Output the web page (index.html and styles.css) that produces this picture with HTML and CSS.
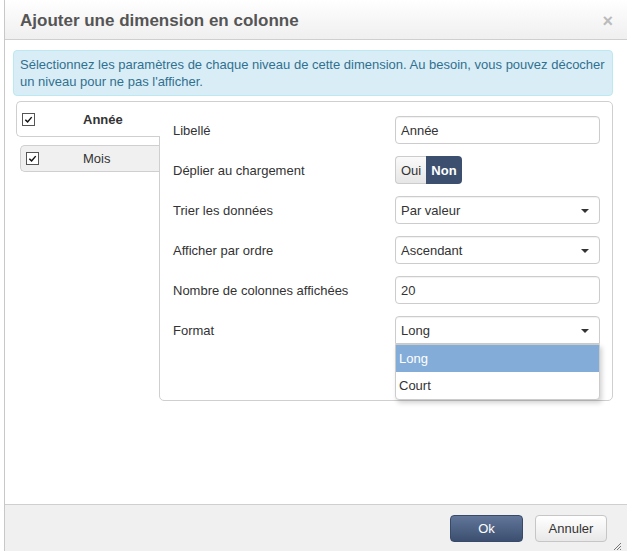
FILE: index.html
```html
<!DOCTYPE html>
<html lang="fr">
<head>
<meta charset="utf-8">
<link rel="stylesheet" href="styles.css">
</head>
<body>
<div class="dialog">
  <div class="dlg-header">
    <h1 class="dlg-title">Ajouter une dimension en colonne</h1>
    <span class="dlg-close">×</span>
  </div>
  <div class="dlg-body">
    <div class="info">Sélectionnez les paramètres de chaque niveau de cette dimension. Au besoin, vous pouvez décocher un niveau pour ne pas l'afficher.</div>
    <div class="levels">
      <div class="tabs">
        <div class="tab tab-active">
          <span class="cb"><svg viewBox="0 0 12 12" width="12" height="12"><path d="M2.5 6.2 L5 8.6 L9.5 3.4" fill="none" stroke="#111" stroke-width="1.6"/></svg></span>
          <span class="tab-label">Année</span>
        </div>
        <div class="tab tab-idle">
          <span class="cb"><svg viewBox="0 0 12 12" width="12" height="12"><path d="M2.5 6.2 L5 8.6 L9.5 3.4" fill="none" stroke="#111" stroke-width="1.6"/></svg></span>
          <span class="tab-label tab-label-idle">Mois</span>
        </div>
      </div>
      <div class="panel">
        <div class="row">
          <label class="lbl">Libellé</label>
          <div class="field">Année</div>
        </div>
        <div class="row">
          <label class="lbl">Déplier au chargement</label>
          <div class="toggle"><span class="tg tg-off">Oui</span><span class="tg tg-on">Non</span></div>
        </div>
        <div class="row">
          <label class="lbl">Trier les données</label>
          <div class="field select">Par valeur<span class="caret"></span></div>
        </div>
        <div class="row">
          <label class="lbl">Afficher par ordre</label>
          <div class="field select">Ascendant<span class="caret"></span></div>
        </div>
        <div class="row">
          <label class="lbl">Nombre de colonnes affichées</label>
          <div class="field">20</div>
        </div>
        <div class="row">
          <label class="lbl">Format</label>
          <div class="field select open">Long<span class="caret"></span>
            <ul class="menu">
              <li class="opt opt-sel">Long</li>
              <li class="opt">Court</li>
            </ul>
          </div>
        </div>
      </div>
    </div>
  </div>
  <div class="dlg-footer">
    <button class="btn btn-primary">Ok</button>
    <button class="btn btn-default">Annuler</button>
  </div>
  <svg class="grip" width="8" height="8" viewBox="0 0 8 8"><path d="M1 8 L8 1 M4 8 L8 4 M7 8 L8 7" stroke="#777" stroke-width="1"/></svg>
</div>
</body>
</html>
```

FILE: styles.css
```css
* { box-sizing: border-box; }
html, body { margin: 0; padding: 0; background: #fff; }
body {
  font-family: Arial, "Liberation Sans", sans-serif;
  font-size: 13px;
  color: #333;
}
.dialog {
  position: relative;
  margin-left: 4px;
  width: 623px;
  height: 551px;
  border-left: 1px solid #c8c8c8;
  display: flex;
  flex-direction: column;
}
.dlg-header {
  height: 40px;
  border-bottom: 1px solid #cfcfcf;
  background: linear-gradient(#ffffff, #efefef);
  display: flex;
  align-items: center;
  justify-content: space-between;
  padding: 0 14px 0 15px;
}
.dlg-title {
  margin: 0;
  font-size: 17px;
  font-weight: bold;
  color: #555;
  padding-top: 2px;
}
.dlg-close {
  color: #bbb;
  font-size: 18px;
  line-height: 1;
  font-weight: bold;
  padding-top: 2px;
}
.dlg-body {
  flex: 1;
  padding: 10px 0 0 8px;
}
.info {
  width: 600px;
  height: 46px;
  background: #d9edf7;
  border: 1px solid #bce8f1;
  border-radius: 4px;
  color: #31708f;
  line-height: 17px;
  padding: 5px 6px 0 6px;
}
.levels {
  display: flex;
  align-items: flex-start;
  margin-top: 5px;
  margin-left: 3px;
}
.tabs {
  width: 143px;
  display: flex;
  flex-direction: column;
  align-items: flex-end;
}
.tab {
  display: flex;
  align-items: center;
  border: 1px solid #cfcfcf;
  border-right: none;
  border-radius: 5px 0 0 5px;
}
.tab-active {
  width: 144px;
  height: 36px;
  margin-right: -1px;
  position: relative;
  z-index: 1;
  background: #fff;
  padding: 0 0 0 5px;
  border-radius: 5px 0 0 5px;
  font-weight: bold;
}
.tab-idle {
  width: 139px;
  height: 27px;
  margin-top: 8px;
  background: #f0f0f0;
  padding-left: 5px;
}
.cb {
  width: 13px;
  height: 13px;
  border: 1px solid #555;
  background: #fff;
  display: inline-flex;
  align-items: center;
  justify-content: center;
  flex: none;
}
.cb svg { width: 11px; height: 11px; }
.tab-label {
  margin-left: 48px;
}
.tab-label-idle {
  margin-left: 44px;
}
.panel {
  width: 454px;
  height: 300px;
  border: 1px solid #cfcfcf;
  border-radius: 0 5px 5px 5px;
  padding: 14px 12px 0 13px;
  display: flex;
  flex-direction: column;
  gap: 12px;
}
.row {
  display: flex;
  align-items: center;
  height: 28px;
}
.lbl {
  width: 222px;
  flex: none;
  padding-top: 1px;
}
.field {
  position: relative;
  width: 205px;
  height: 28px;
  border: 1px solid #ccc;
  border-radius: 4px;
  background: #fff;
  padding: 0 5px;
  display: flex;
  align-items: center;
  box-shadow: inset 0 1px 1px rgba(0,0,0,0.06);
}
.caret {
  position: absolute;
  right: 10px;
  top: 12px;
  width: 0;
  height: 0;
  border-left: 4px solid transparent;
  border-right: 4px solid transparent;
  border-top: 4px solid #333;
}
.field.open {
  border-radius: 4px 4px 0 0;
}
.menu {
  position: absolute;
  left: -1px;
  top: 27px;
  width: 205px;
  margin: 0;
  padding: 0;
  list-style: none;
  background: #fff;
  border: 1px solid #ccc;
  border-radius: 0 0 4px 4px;
  box-shadow: 2px 3px 5px rgba(0,0,0,0.18);
  z-index: 2;
}
.opt {
  height: 27px;
  line-height: 27px;
  padding-left: 3px;
}
.opt-sel {
  background: #84acd8;
  color: #fff;
}
.toggle {
  display: flex;
  height: 28px;
}
.tg {
  display: flex;
  align-items: center;
  justify-content: center;
  height: 28px;
}
.tg-off {
  width: 31px;
  border: 1px solid #ccc;
  border-right: none;
  border-radius: 4px 0 0 4px;
  background: linear-gradient(#fafafa, #e6e6e6);
  color: #333;
}
.tg-on {
  width: 36px;
  border-radius: 0 4px 4px 0;
  background: #3d4f6f;
  color: #fff;
  font-weight: bold;
}
.dlg-footer {
  height: 47px;
  border-top: 1px solid #cfcfcf;
  background: #f0f0f0;
  display: flex;
  justify-content: flex-end;
  align-items: flex-start;
  gap: 12px;
  padding: 10px 20px 0 0;
}
.btn {
  height: 27px;
  font-family: Arial, "Liberation Sans", sans-serif;
  font-size: 13px;
  border-radius: 4px;
  padding: 0;
}
.btn-primary {
  width: 73px;
  color: #fff;
  border: 1px solid #384a68;
  background: linear-gradient(#61769a, #3c4f70);
}
.btn-default {
  width: 72px;
  color: #333;
  border: 1px solid #c6c6c6;
  background: linear-gradient(#ffffff, #e8e8e8);
}
.grip {
  position: absolute;
  right: 6px;
  bottom: 1px;
}
```
